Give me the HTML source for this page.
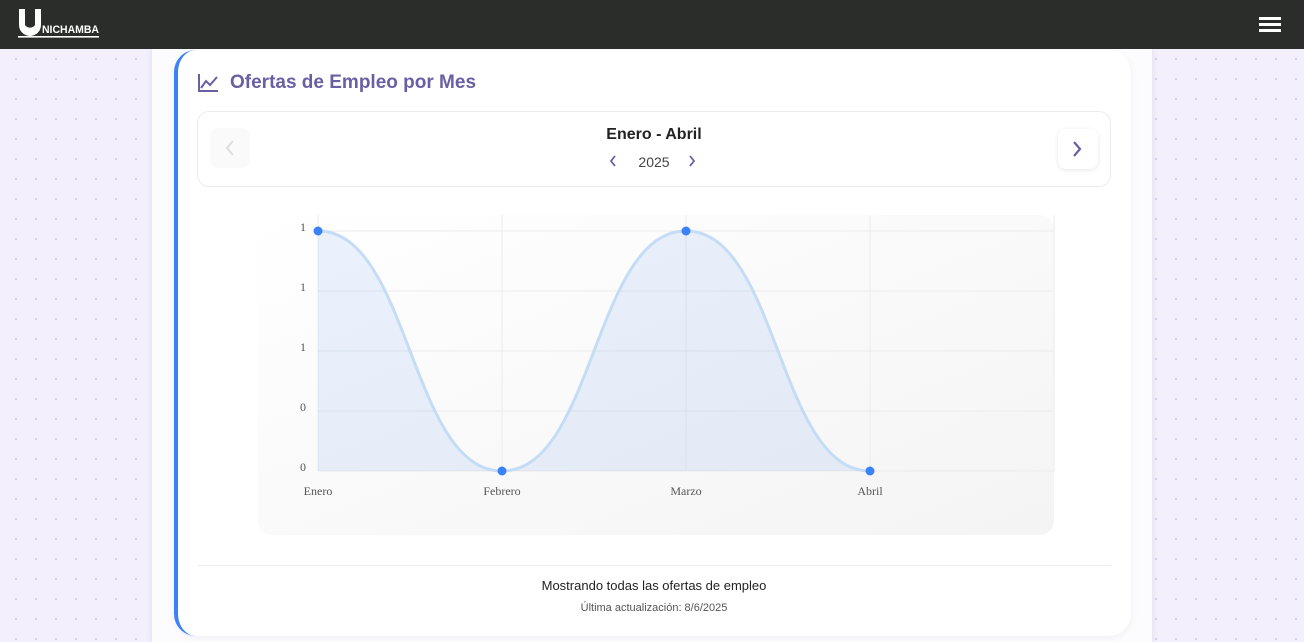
<!DOCTYPE html>
<html><head><meta charset="utf-8"><style>
*{margin:0;padding:0;box-sizing:border-box}
body{width:1304px;height:642px;overflow:hidden;font-family:"Liberation Sans",sans-serif;background:#f3effc;background-image:radial-gradient(circle,#dcc9ec 1px,transparent 1.3px);background-size:20px 20px;background-position:6px 9px;position:relative}
.hdr{position:absolute;left:0;top:0;width:1304px;height:49px;background:#2a2d2a;z-index:5}
.col{position:absolute;left:152px;top:49px;width:1000px;height:593px;background:#fcfbfe;box-shadow:0 0 6px rgba(120,100,160,.15)}
.card{position:absolute;left:174px;top:50px;width:957px;height:586px;background:#fff;border-radius:22px;border-left:4px solid #3b82f6;box-shadow:0 2px 8px rgba(0,0,0,.05)}
.title{position:absolute;left:230px;top:72px;font-size:19px;font-weight:bold;color:#6a5fa3}
.nav{position:absolute;left:197px;top:111px;width:914px;height:76px;border:1px solid #ececec;border-radius:12px;background:#fff}
.btn{position:absolute;width:40px;height:40px;border-radius:8px}
</style></head><body>
<div class="hdr">
<svg width="84" height="34" style="position:absolute;left:17px;top:7px" viewBox="0 0 84 34">
<path d="M2 2h6v16a6 6 0 0 0 10 0V2h6v16a11 11 0 0 1-22 0z" fill="#fff"/>
<text x="25" y="26" font-size="11" font-weight="bold" fill="#fff" font-family="Liberation Sans" textLength="57" lengthAdjust="spacingAndGlyphs">NICHAMBA</text>
<rect x="1" y="29" width="81" height="1.6" fill="#fff"/></svg>
<div style="position:absolute;left:1259px;top:17px;width:22px;height:3px;background:#fff;box-shadow:0 6px 0 #fff,0 12px 0 #fff"></div>
</div>
<div class="col"></div>
<div class="card"></div>
<svg style="position:absolute;left:197px;top:73px" width="22" height="20" viewBox="0 0 22 20"><path d="M2 1v17h19M4 15l5-7 4 4 7-8" fill="none" stroke="#6a5fa3" stroke-width="2"/></svg>
<div class="title">Ofertas de Empleo por Mes</div>
<div class="nav">
<div class="btn" style="left:12px;top:16px;background:#fafafa"><svg width="40" height="40"><path d="M23 13l-6 7 6 7" fill="none" stroke="#ddd" stroke-width="2"/></svg></div>
<div style="position:absolute;left:0;width:912px;top:14px;text-align:center;font-weight:bold;font-size:16px;color:#222">Enero - Abril</div>
<div style="position:absolute;left:0;width:912px;top:42px;text-align:center;font-size:14px;color:#444">2025</div>
<svg style="position:absolute;left:410px;top:42px" width="90" height="14"><path d="M7 2l-4 5 4 5M82 2l4 5-4 5" fill="none" stroke="#6a5fa3" stroke-width="1.8"/></svg>
<div class="btn" style="left:860px;top:17px;background:#fff;box-shadow:0 1px 4px rgba(0,0,0,.1)"><svg width="40" height="40"><path d="M16 13l6 7-6 7" fill="none" stroke="#6a5fa3" stroke-width="2.2"/></svg></div>
</div>
<svg style="position:absolute;left:0;top:0" width="1304" height="642">
<defs><linearGradient id="g" x1="0" y1="0" x2="1" y2="1"><stop offset="0" stop-color="#fff"/><stop offset="1" stop-color="#f4f4f4"/></linearGradient></defs>
<rect x="258" y="215" width="796" height="320" rx="14" fill="url(#g)"/>
<g stroke="#ebebeb" stroke-width="1">
<path d="M318 231H1054M318 291H1054M318 351H1054M318 411H1054M318 471H1054M318 215V471M502 215V471M686 215V471M870 215V471M1054 215V471"/></g>
<path d="M318 231C410 231 410 471 502 471C594 471 594 231 686 231C778 231 778 471 870 471L318 471Z" fill="rgba(59,130,246,.1)"/>
<path d="M318 231C410 231 410 471 502 471C594 471 594 231 686 231C778 231 778 471 870 471" fill="none" stroke="#c4dcf6" stroke-width="3"/>
<g fill="#3b82f6"><circle cx="318" cy="231" r="4.5"/><circle cx="502" cy="471" r="4.5"/><circle cx="686" cy="231" r="4.5"/><circle cx="870" cy="471" r="4.5"/></g>
<g font-family="Liberation Serif" font-size="12" fill="#555">
<text x="300" y="231">1</text><text x="300" y="291">1</text><text x="300" y="351">1</text><text x="300" y="411">0</text><text x="300" y="471">0</text>
<text x="318" y="495" text-anchor="middle">Enero</text><text x="502" y="495" text-anchor="middle">Febrero</text><text x="686" y="495" text-anchor="middle">Marzo</text><text x="870" y="495" text-anchor="middle">Abril</text></g>
<path d="M197 565.5H1111" stroke="#eee"/>
</svg>
<div style="position:absolute;left:197px;width:914px;top:578px;text-align:center;font-size:13px;color:#222">Mostrando todas las ofertas de empleo</div>
<div style="position:absolute;left:197px;width:914px;top:602px;text-align:center;font-size:11px;color:#555">Última actualización: 8/6/2025</div>
</body></html>
